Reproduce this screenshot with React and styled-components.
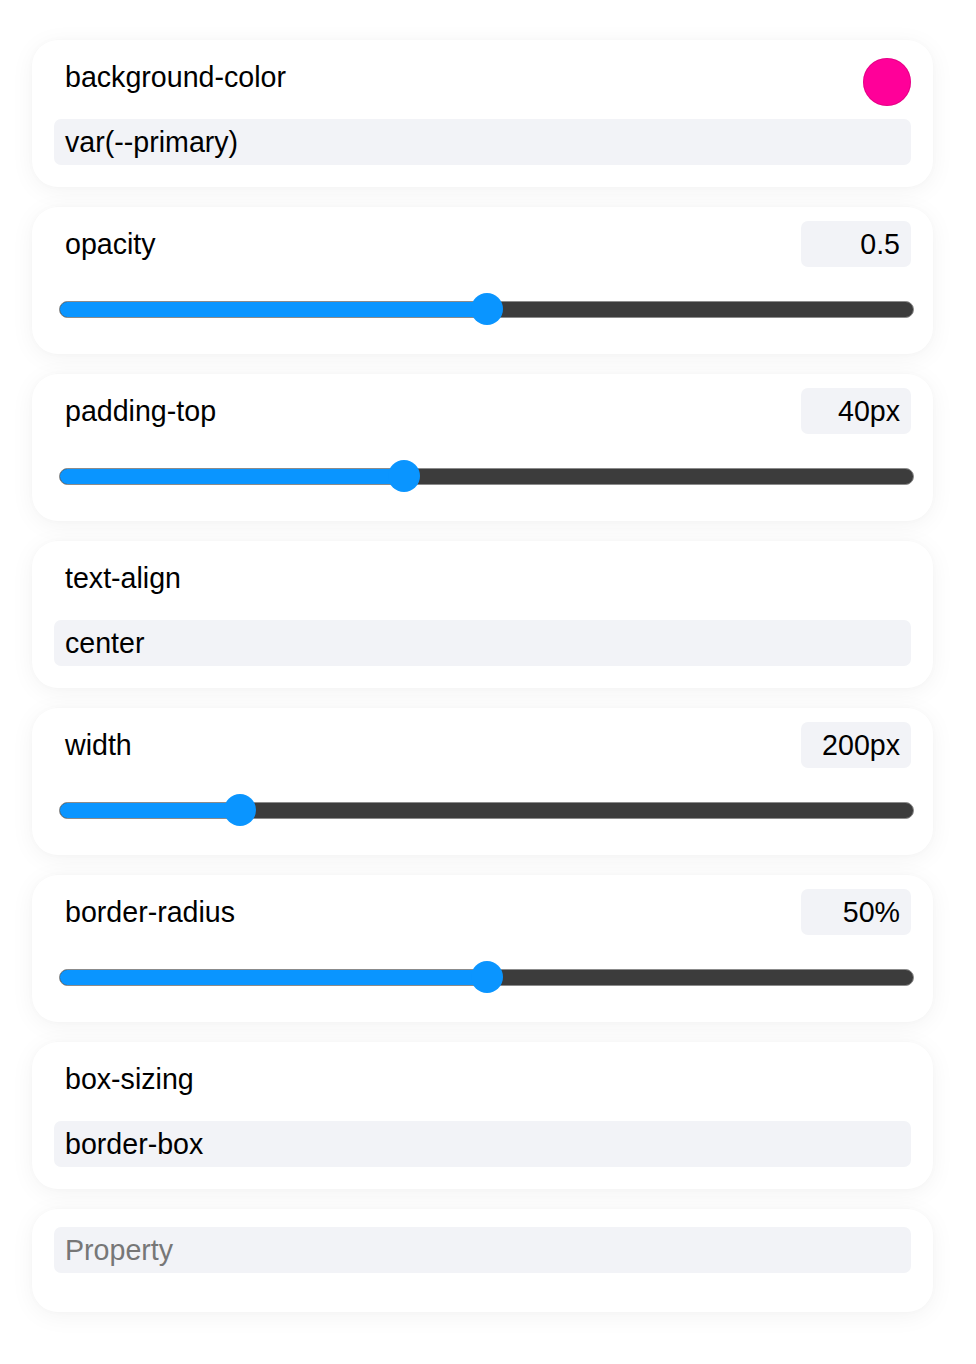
import React from 'react';
import styled, { createGlobalStyle } from 'styled-components';

const GlobalStyle = createGlobalStyle`
  html, body {
    margin: 0;
    padding: 0;
    background: #ffffff;
  }
  body {
    font-family: "Liberation Sans", Arial, Helvetica, sans-serif;
    color: #000;
  }
`;

const props = [
  { name: 'background-color', type: 'color', value: 'var(--primary)', swatch: '#ff0099' },
  { name: 'opacity', type: 'range', value: '0.5', pct: 0.5 },
  { name: 'padding-top', type: 'range', value: '40px', pct: 0.4 },
  { name: 'text-align', type: 'text', value: 'center' },
  { name: 'width', type: 'range', value: '200px', pct: 0.2 },
  { name: 'border-radius', type: 'range', value: '50%', pct: 0.5 },
  { name: 'box-sizing', type: 'text', value: 'border-box' },
];

const PropertyRow = ({ item }) => (
  <Card>
    <Header>
      <Label>{item.name}</Label>
      {item.type === 'color' && <Swatch $color={item.swatch} />}
      {item.type === 'range' && <ValueBox>{item.value}</ValueBox>}
    </Header>
    {item.type === 'range' ? (
      <SliderArea>
        <Track>
          <Fill style={{ width: `calc(16px + ${item.pct} * (100% - 32px))` }} />
          <Thumb style={{ left: `calc(16px + ${item.pct} * (100% - 32px))` }} />
        </Track>
      </SliderArea>
    ) : (
      <Field>{item.value}</Field>
    )}
  </Card>
);

const App = () => {
  return (
    <Page>
      <GlobalStyle />
      {props.map((p) => (
        <PropertyRow key={p.name} item={p} />
      ))}
      <AddCard>
        <Field $placeholder>Property</Field>
      </AddCard>
    </Page>
  );
};

const Page = styled.div`
  width: 901px;
  padding: 40px 0 40px 32px;
  display: flex;
  flex-direction: column;
  gap: 20px;
`;

const Card = styled.div`
  background: #fff;
  border-radius: 26px;
  box-shadow: 0 4px 24px rgba(0, 0, 0, 0.05), 0 0 6px rgba(0, 0, 0, 0.02);
  padding: 14px 22px 22px;
  display: flex;
  flex-direction: column;
  gap: 13px;
`;

const AddCard = styled(Card)`
  padding: 18px 22px 39px;
`;

const Header = styled.div`
  min-height: 52px;
  display: flex;
  align-items: flex-start;
  justify-content: space-between;
`;

const Label = styled.div`
  font-size: 28.6px;
  line-height: 47px;
  padding-left: 11px;
`;

const Swatch = styled.div`
  width: 48px;
  height: 48px;
  margin-top: 4px;
  border-radius: 50%;
  background: ${(p) => p.$color};
  box-shadow: inset 0 0 0 1px rgba(180, 0, 100, 0.35);
`;

const ValueBox = styled.div`
  width: 110px;
  height: 46px;
  box-sizing: border-box;
  padding-right: 11px;
  border-radius: 7px;
  background: #f2f3f7;
  font-size: 28.6px;
  line-height: 46px;
  text-align: right;
`;

const Field = styled.div`
  height: 46px;
  box-sizing: border-box;
  padding-left: 11px;
  border-radius: 7px;
  background: #f2f3f7;
  font-size: 28.6px;
  line-height: 46px;
  color: ${(p) => (p.$placeholder ? '#777' : '#000')};
`;

const SliderArea = styled.div`
  height: 46px;
  display: flex;
  align-items: center;
  margin: 0 -3px 0 5px;
`;

const Track = styled.div`
  position: relative;
  flex: 1;
  height: 17px;
  box-sizing: border-box;
  border: 1.5px solid #8b8b8b;
  border-radius: 9px;
  background: #3c3c3c;
`;

const Fill = styled.div`
  position: absolute;
  left: 0;
  top: 0;
  bottom: 0;
  background: #0a95ff;
  border-radius: 8px 0 0 8px;
`;

const Thumb = styled.div`
  position: absolute;
  top: 50%;
  width: 32px;
  height: 32px;
  border-radius: 50%;
  background: #0a95ff;
  transform: translate(-50%, -50%);
`;

export default App;
